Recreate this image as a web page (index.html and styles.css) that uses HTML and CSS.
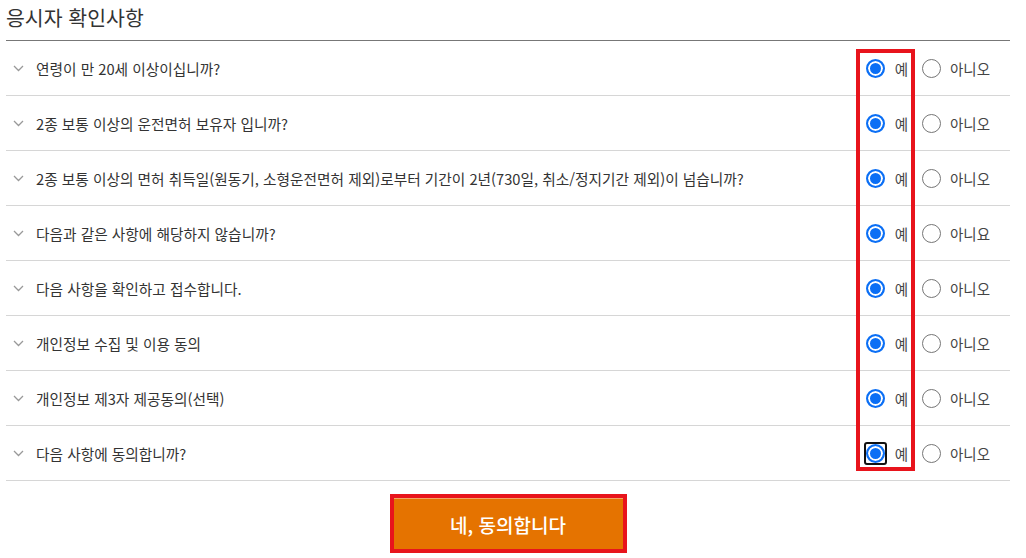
FILE: index.html
```html
<!DOCTYPE html>
<html lang="ko">
<head>
<meta charset="UTF-8">
<meta name="viewport" content="width=device-width, initial-scale=1.0">
<title>응시자 확인사항</title>
<link rel="stylesheet" href="styles.css">
</head>
<body>

<div class="wrap">
    <h2 class="title">응시자 확인사항</h2>

    <ul class="checks">
        <li class="row">
            <span class="ask"><svg class="chev" width="11" height="7" viewBox="0 0 11 7"><polyline points="1,1 5.5,5.5 10,1"/></svg>연령이 만 20세 이상이십니까?</span>
            <span class="answers">
                <label><input type="radio" name="q1" checked>예</label>
                <label><input type="radio" name="q1">아니오</label>
            </span>
        </li>
        <li class="row">
            <span class="ask"><svg class="chev" width="11" height="7" viewBox="0 0 11 7"><polyline points="1,1 5.5,5.5 10,1"/></svg>2종 보통 이상의 운전면허 보유자 입니까?</span>
            <span class="answers">
                <label><input type="radio" name="q2" checked>예</label>
                <label><input type="radio" name="q2">아니오</label>
            </span>
        </li>
        <li class="row">
            <span class="ask"><svg class="chev" width="11" height="7" viewBox="0 0 11 7"><polyline points="1,1 5.5,5.5 10,1"/></svg>2종 보통 이상의 면허 취득일(원동기, 소형운전면허 제외)로부터 기간이 2년(730일, 취소/정지기간 제외)이 넘습니까?</span>
            <span class="answers">
                <label><input type="radio" name="q3" checked>예</label>
                <label><input type="radio" name="q3">아니오</label>
            </span>
        </li>
        <li class="row">
            <span class="ask"><svg class="chev" width="11" height="7" viewBox="0 0 11 7"><polyline points="1,1 5.5,5.5 10,1"/></svg>다음과 같은 사항에 해당하지 않습니까?</span>
            <span class="answers">
                <label><input type="radio" name="q4" checked>예</label>
                <label><input type="radio" name="q4">아니요</label>
            </span>
        </li>
        <li class="row">
            <span class="ask"><svg class="chev" width="11" height="7" viewBox="0 0 11 7"><polyline points="1,1 5.5,5.5 10,1"/></svg>다음 사항을 확인하고 접수합니다.</span>
            <span class="answers">
                <label><input type="radio" name="q5" checked>예</label>
                <label><input type="radio" name="q5">아니오</label>
            </span>
        </li>
        <li class="row">
            <span class="ask"><svg class="chev" width="11" height="7" viewBox="0 0 11 7"><polyline points="1,1 5.5,5.5 10,1"/></svg>개인정보 수집 및 이용 동의</span>
            <span class="answers">
                <label><input type="radio" name="q6" checked>예</label>
                <label><input type="radio" name="q6">아니오</label>
            </span>
        </li>
        <li class="row">
            <span class="ask"><svg class="chev" width="11" height="7" viewBox="0 0 11 7"><polyline points="1,1 5.5,5.5 10,1"/></svg>개인정보 제3자 제공동의(선택)</span>
            <span class="answers">
                <label><input type="radio" name="q7" checked>예</label>
                <label><input type="radio" name="q7">아니오</label>
            </span>
        </li>
        <li class="row">
            <span class="ask"><svg class="chev" width="11" height="7" viewBox="0 0 11 7"><polyline points="1,1 5.5,5.5 10,1"/></svg>다음 사항에 동의합니까?</span>
            <span class="answers">
                <label><span class="ring"><input type="radio" name="q8" checked></span>예</label>
                <label><input type="radio" name="q8">아니오</label>
            </span>
        </li>
    </ul>
    <div class="mark"></div>

    <div class="actions">
        <div class="btn-frame">
            <button type="button" class="agree">네, 동의합니다</button>
        </div>
    </div>
</div>

</body>
</html>
```

FILE: styles.css
```css
body {
    margin: 0;
    font-family: "Noto Sans CJK KR", "Noto Sans", sans-serif;
    color: #333;
    background: #fff;
}
.wrap {
    position: relative;
    width: 1004px;
    margin-left: 6px;
}
.title {
    margin: 0;
    height: 41px;
    box-sizing: border-box;
    font-size: 20.5px;
    font-weight: normal;
    line-height: 34px;
    color: #333;
    border-bottom: 1px solid #777;
}
.checks {
    list-style: none;
    margin: 0;
    padding: 0;
}
.row {
    display: flex;
    align-items: center;
    justify-content: space-between;
    height: 54px;
    border-bottom: 1px solid #d6d6d6;
    font-size: 14.7px;
}
.ask {
    display: flex;
    align-items: center;
    padding-left: 7px;
}
.chev {
    margin-right: 12px;
    fill: none;
    stroke: #999;
    stroke-width: 1.3;
}
.answers {
    display: flex;
    align-items: center;
    gap: 14px;
    padding-right: 20px;
}
.answers label {
    display: flex;
    align-items: center;
    gap: 10px;
    color: #444;
    font-size: 14.5px;
}
.answers label:last-child {
    gap: 9px;
}
.answers input {
    appearance: none;
    -webkit-appearance: none;
    display: block;
    width: 19px;
    height: 19px;
    margin: 0;
    border: 1px solid #767676;
    border-radius: 50%;
    background: #fff;
}
.answers input:checked {
    border: 2px solid #0b6ff5;
    box-shadow: inset 0 0 0 2px #fff;
    background: #0b6ff5;
}
.ring {
    display: block;
    margin: -2px;
    border: 2px solid #111;
    border-radius: 3px;
}
.mark {
    position: absolute;
    left: 850px;
    top: 49px;
    width: 51px;
    height: 414px;
    border: 4px solid #e8141c;
    pointer-events: none;
}
.actions {
    display: flex;
    justify-content: center;
    margin-top: 13px;
}
.btn-frame {
    border: 4px solid #e8141c;
}
.agree {
    display: block;
    width: 229px;
    height: 51px;
    border: 0;
    border-top: 1px solid #f3a464;
    background: #e57300;
    color: #fff;
    font-family: "Noto Sans CJK KR", "Noto Sans", sans-serif;
    font-size: 19px;
    font-weight: 500;
    cursor: pointer;
}
```
